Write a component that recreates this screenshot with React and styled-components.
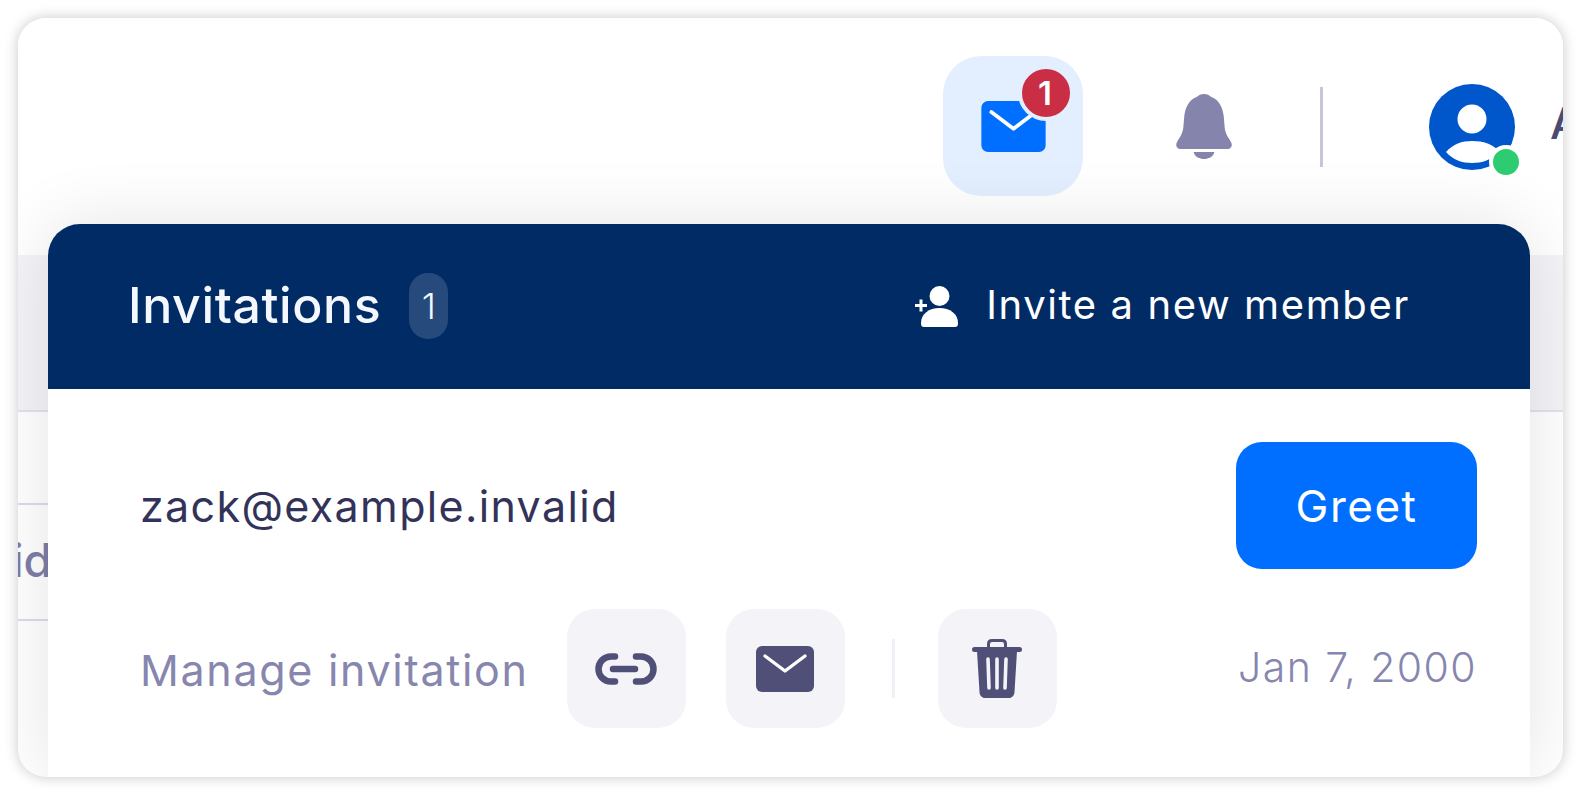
import { createGlobalStyle } from "styled-components"
import styled from "styled-components"

const GlobalStyle = createGlobalStyle`
    * { box-sizing: border-box; }
    html, body {
        margin: 0;
        height: 100%;
        background: #FFFFFF;
        overflow: hidden;
    }
    body {
        font-family: "Inter", "Liberation Sans", sans-serif;
    }
`

function EnvelopeIcon({ fill, w, h }) {
    return (
        <svg width={w} height={h} viewBox="0 0 58 46">
            <rect x="0" y="0" width="58" height="46" rx="6" fill={fill} />
            <path d="M9 10 L29 25 L49 10" fill="none" stroke="#FFFFFF" strokeWidth="3.4" strokeLinecap="round" strokeLinejoin="round" />
        </svg>
    )
}

function BellIcon() {
    return (
        <svg width="56" height="65" viewBox="0 0 54 65" preserveAspectRatio="none" style={{ display: "block" }}>
            <path
                fill="#8484AC"
                d="M27 0 C30 0 32 1 34 3 C42 6 45 14 46 22 L47 34 C48 41 51 44 53 48 C55 52 53 55 50 55 L4 55 C1 55 -1 52 1 48 C3 44 6 41 7 34 L8 22 C9 14 12 6 20 3 C22 1 24 0 27 0 Z"
            />
            <path fill="#8484AC" d="M17 58 H37 C36 63 31 65 27 65 C23 65 18 63 17 58 Z" />
        </svg>
    )
}

function AvatarIcon() {
    return (
        <svg width="86" height="86" viewBox="0 0 86 86">
            <circle cx="43" cy="43" r="43" fill="#0057CC" />
            <circle cx="43" cy="35" r="14.5" fill="#FFFFFF" />
            <path d="M17 68 C24 60 33 57 43 57 C54 57 64 60 71 68 C62 76 53 79 43 79 C33 79 24 76 17 68 Z" fill="#FFFFFF" />
        </svg>
    )
}

function InviteIcon() {
    return (
        <svg width="43" height="41" viewBox="0 0 43 41">
            <circle cx="24.5" cy="10" r="10" fill="#FFFFFF" />
            <path d="M6 37 C6 28 14 22 24.5 22 C35 22 43 28 43 37 C43 40 42 41 40 41 L9 41 C7 41 6 40 6 37 Z" fill="#FFFFFF" />
            <path d="M0 19.5 H12 M6 13.5 V25.5" stroke="#FFFFFF" strokeWidth="3" />
        </svg>
    )
}

function LinkIcon() {
    return (
        <svg width="62" height="32" viewBox="0 0 62 32" fill="none" stroke="#4F4F78" strokeWidth="6.5" strokeLinecap="round">
            <path d="M20 3.5 H16 A12.5 12.5 0 0 0 16 28.5 H20" />
            <path d="M41 3.5 H46 A12.5 12.5 0 0 1 46 28.5 H41" />
            <path d="M18 16 H40" />
        </svg>
    )
}

function TrashIcon() {
    return (
        <svg width="50" height="59" viewBox="0 0 50 59">
            <path d="M16.5 9 V5 C16.5 2.8 18 1.5 20 1.5 H30 C32 1.5 33.5 2.8 33.5 5 V9" fill="none" stroke="#4F4F78" strokeWidth="3" />
            <rect x="0" y="8" width="50" height="5" rx="2.5" fill="#4F4F78" />
            <path d="M5 12 H45 L42.5 53 C42.3 56.5 40 59 37 59 H13 C10 59 7.7 56.5 7.5 53 Z" fill="#4F4F78" />
            <path d="M16 20 L17 49 M25 20 V49 M34 20 L33 49" stroke="#F3F3F8" strokeWidth="3.6" strokeLinecap="round" />
        </svg>
    )
}

export default function App() {
    return (
        <>
            <GlobalStyle />
            <Page>
                <Window>
                    <TopBar>
                        <MailButton>
                            <EnvelopeIcon fill="#006FFF" w={65} h={51} />
                            <MailBadge>1</MailBadge>
                        </MailButton>
                        <BellSlot>
                            <BellIcon />
                        </BellSlot>
                        <BarDivider />
                        <AvatarWrap>
                            <AvatarIcon />
                            <OnlineDot />
                        </AvatarWrap>
                        <UserName>Admin</UserName>
                    </TopBar>
                    <TableHead />
                    <TableRow>
                        <CellText>id</CellText>
                    </TableRow>

                    <Popup>
                        <PopupHeader>
                            <HeaderTitle>
                                <Title>Invitations</Title>
                                <CountPill>1</CountPill>
                            </HeaderTitle>
                            <InviteLink>
                                <InviteIcon />
                                <InviteText>Invite a new member</InviteText>
                            </InviteLink>
                        </PopupHeader>
                        <PopupBody>
                            <EmailRow>
                                <Email>zack@example.invalid</Email>
                                <GreetButton>Greet</GreetButton>
                            </EmailRow>
                            <ManageRow>
                                <ManageLabel>Manage invitation</ManageLabel>
                                <ActionButton><LinkIcon /></ActionButton>
                                <ActionButton><EnvelopeIcon fill="#4F4F78" w={58} h={46} /></ActionButton>
                                <ActionDivider />
                                <ActionButton><TrashIcon /></ActionButton>
                                <DateText>Jan 7, 2000</DateText>
                            </ManageRow>
                        </PopupBody>
                    </Popup>
                </Window>
            </Page>
        </>
    )
}

const Page = styled.div`
    width: 100vw;
    height: 100vh;
    padding: 18px;
`
const Window = styled.div`
    position: relative;
    width: 100%;
    height: 100%;
    background: #FFFFFF;
    border-radius: 28px;
    overflow: hidden;
    box-shadow: 0 0 14px rgba(0, 0, 0, 0.22);
`
const TopBar = styled.div`
    height: 237px;
    padding: 38px 0 0 925px;
    display: flex;
    align-items: flex-start;
    background: #FFFFFF;
    white-space: nowrap;
`
const MailButton = styled.div`
    position: relative;
    width: 140px;
    height: 140px;
    flex-shrink: 0;
    border-radius: 38px;
    background: #E3EFFE;
    display: flex;
    align-items: center;
    justify-content: center;
`
const MailBadge = styled.div`
    position: absolute;
    left: 75px;
    top: 9px;
    width: 56px;
    height: 56px;
    border-radius: 50%;
    border: 4px solid #E3EFFE;
    background: #C92E44;
    color: #FFFFFF;
    font-size: 33px;
    font-weight: 600;
    padding-right: 2px;
    display: flex;
    align-items: center;
    justify-content: center;
`
const BellSlot = styled.div`
    width: 56px;
    height: 65px;
    flex-shrink: 0;
    margin: 38px 0 0 93px;
`
const BarDivider = styled.div`
    width: 3px;
    height: 80px;
    flex-shrink: 0;
    margin: 31px 0 0 88px;
    background: #C6C6DA;
`
const AvatarWrap = styled.div`
    position: relative;
    width: 86px;
    height: 86px;
    flex-shrink: 0;
    margin: 28px 0 0 106px;
`
const OnlineDot = styled.div`
    position: absolute;
    left: 60px;
    top: 61px;
    width: 34px;
    height: 34px;
    border-radius: 50%;
    background: #2ECC71;
    border: 4px solid #FFFFFF;
`
const UserName = styled.div`
    margin: 40px 0 0 35px;
    font-size: 44px;
    font-weight: 500;
    color: #4A4A72;
`
const TableHead = styled.div`
    height: 157px;
    background: #F4F4F8;
    border-bottom: 2px solid #E2E2EC;
`
const TableRow = styled.div`
    width: 34px;
    height: 118px;
    margin-top: 91px;
    padding-bottom: 4px;
    border-top: 2px solid #DCDCE8;
    border-bottom: 2px solid #DCDCE8;
    overflow: hidden;
    display: flex;
    align-items: center;
    justify-content: flex-end;
`
const CellText = styled.span`
    font-size: 46px;
    font-weight: 500;
    color: #7D7DA8;
`
const Popup = styled.div`
    position: absolute;
    left: 30px;
    top: 206px;
    bottom: 0;
    width: 1482px;
    background: #FFFFFF;
    border-radius: 32px 32px 0 0;
    box-shadow: 0 0 70px rgba(0, 0, 0, 0.11);
`
const PopupHeader = styled.div`
    height: 165px;
    padding: 0 120px 0 80px;
    background: #002B64;
    border-radius: 32px 32px 0 0;
    display: flex;
    align-items: center;
    justify-content: space-between;
`
const HeaderTitle = styled.div`
    display: flex;
    align-items: center;
    gap: 28px;
`
const Title = styled.div`
    padding-bottom: 4px;
    font-size: 50px;
    font-weight: 500;
    letter-spacing: 0.6px;
    color: #F4F8FE;
`
const CountPill = styled.div`
    width: 39px;
    height: 66px;
    margin-bottom: 2px;
    border-radius: 19px;
    background: #274A7C;
    color: #F4F8FE;
    font-size: 36px;
    font-weight: 300;
    display: flex;
    align-items: center;
    justify-content: center;
`
const InviteLink = styled.div`
    display: flex;
    align-items: center;
    gap: 28px;
    color: #FFFFFF;
`
const InviteText = styled.span`
    padding-bottom: 4px;
    font-size: 40px;
    letter-spacing: 1.6px;
`
const PopupBody = styled.div`
    padding: 53px 53px 0 92px;
`
const EmailRow = styled.div`
    display: flex;
    align-items: center;
    justify-content: space-between;
`
const Email = styled.div`
    font-size: 43px;
    font-weight: 420;
    letter-spacing: 1.35px;
    color: #33335A;
`
const GreetButton = styled.button`
    width: 241px;
    height: 127px;
    border: none;
    border-radius: 26px;
    background: #006FFF;
    color: #FFFFFF;
    font-family: inherit;
    font-size: 44px;
    letter-spacing: 1.5px;
`
const ManageRow = styled.div`
    margin-top: 40px;
    display: flex;
    align-items: center;
    gap: 40px;
`
const ManageLabel = styled.div`
    padding-top: 2px;
    margin-right: -2px;
    font-size: 43px;
    font-weight: 420;
    letter-spacing: 1.69px;
    color: #8686AE;
`
const ActionButton = styled.div`
    width: 119px;
    height: 119px;
    border-radius: 28px;
    background: #F3F3F8;
    display: flex;
    align-items: center;
    justify-content: center;
`
const ActionDivider = styled.div`
    width: 3px;
    height: 59px;
    margin: 0 3px 0 7px;
    background: #F0F0F6;
`
const DateText = styled.div`
    margin-left: auto;
    padding-bottom: 4px;
    font-size: 41px;
    font-weight: 300;
    letter-spacing: 1.4px;
    color: #8686AE;
`
